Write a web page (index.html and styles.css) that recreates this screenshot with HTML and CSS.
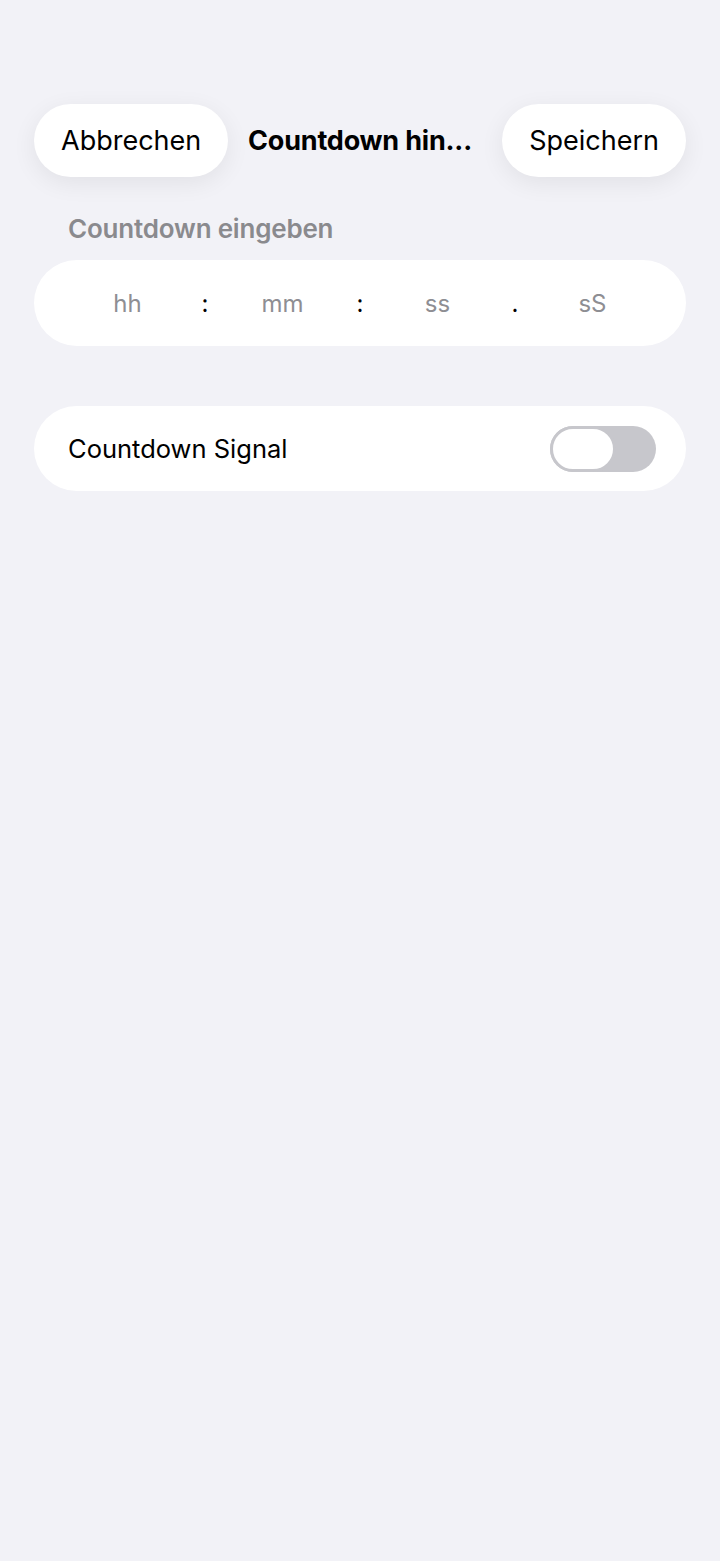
FILE: index.html
```html
<!DOCTYPE html>
<html lang="de">
<head>
<meta charset="utf-8">
<title>Countdown hinzufügen</title>
<link rel="stylesheet" href="styles.css">
</head>
<body>
<div class="screen">
  <header class="nav">
    <button class="pill pill-left">Abbrechen</button>
    <div class="title">Countdown hin...</div>
    <button class="pill pill-right">Speichern</button>
  </header>

  <div class="section-label">Countdown eingeben</div>
  <div class="card time-card">
    <span class="ph">hh</span>
    <span class="sep">:</span>
    <span class="ph">mm</span>
    <span class="sep">:</span>
    <span class="ph">ss</span>
    <span class="sep">.</span>
    <span class="ph">sS</span>
  </div>

  <div class="card toggle-card">
    <span class="row-label">Countdown Signal</span>
    <span class="switch"><span class="knob"></span></span>
  </div>
</div>
</body>
</html>
```

FILE: styles.css
```css
html, body {
  margin: 0;
  padding: 0;
  background: #f2f2f7;
}
body {
  font-family: Inter, "Liberation Sans", sans-serif;
  color: #000;
}
.screen {
  width: 720px;
  min-height: 1561px;
  padding: 104px 34px 0;
  box-sizing: border-box;
}
.nav {
  display: grid;
  grid-template-columns: 1fr auto 1fr;
  align-items: center;
  height: 73px;
}
.pill {
  height: 73px;
  border: none;
  border-radius: 37px;
  background: #fff;
  font-family: Inter, "Liberation Sans", sans-serif;
  font-size: 27px;
  font-weight: 400;
  color: #000;
  padding: 0 27px;
  box-shadow: 0 6px 24px rgba(0, 0, 0, 0.07);
}
.pill-left {
  justify-self: start;
}
.pill-right {
  justify-self: end;
}
.title {
  font-size: 27px;
  font-weight: 700;
  letter-spacing: -0.2px;
}
.section-label {
  margin: 37px 0 0 34px;
  font-size: 26px;
  font-weight: 600;
  color: #8a8a8e;
  height: 29px;
  line-height: 29px;
  letter-spacing: -0.2px;
}
.card {
  background: #fff;
  border-radius: 43px;
}
.time-card {
  margin-top: 17px;
  height: 86px;
  display: grid;
  grid-template-columns: repeat(7, 77.5px);
  justify-content: center;
  align-items: center;
  font-size: 24px;
}
.time-card span {
  text-align: center;
}
.ph {
  color: #8e8e93;
}
.sep {
  color: #000;
}
.toggle-card {
  margin-top: 60px;
  height: 85px;
  display: flex;
  align-items: center;
  justify-content: space-between;
  padding: 0 30px 0 34px;
}
.row-label {
  font-size: 25.5px;
}
.switch {
  width: 106px;
  height: 46px;
  border-radius: 23px;
  background: #c7c7cc;
  display: flex;
  align-items: center;
}
.knob {
  width: 66px;
  height: 46px;
  border-radius: 23px;
  background: #fff;
  border: 3px solid #c7c7cc;
  box-sizing: border-box;
}
```
